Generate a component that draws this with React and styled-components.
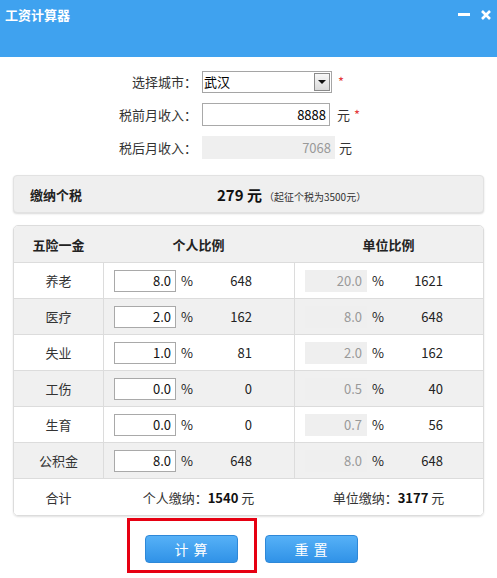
import React from "react";
import styled, { createGlobalStyle } from "styled-components";

const GlobalStyle = createGlobalStyle`
  html, body { margin: 0; padding: 0; background: #fff; }
  body {
    font-family: "Noto Sans CJK SC", "Noto Sans", "Liberation Sans", sans-serif;
    font-size: 13px;
    color: #333;
  }
  * { box-sizing: border-box; }
`;

const Page = styled.div`
  width: 497px;
  height: 578px;
  overflow: hidden;
`;

const TitleBar = styled.div`
  height: 57px;
  background: #3fa2ef;
  display: flex;
  justify-content: space-between;
  align-items: flex-start;
  padding: 7px 5px 0 5px;
`;

const Title = styled.div`
  color: #fff;
  font-weight: bold;
  font-size: 13px;
  line-height: 16px;
`;

const WinBtns = styled.div`
  display: flex;
  gap: 9px;
  padding-top: 2px;
`;

const Form = styled.div`
  display: flex;
  flex-direction: column;
  gap: 10px;
  padding-top: 13px;
`;

const FormRow = styled.div`
  display: flex;
  align-items: center;
  height: 23px;
`;

const FieldLabel = styled.div`
  width: 197px;
  text-align: right;
  margin-right: 5px;
  color: #333;
`;

const SelectBox = styled.div`
  width: 130px;
  height: 22px;
  border: 1px solid #a5a5a5;
  background: #fff;
  display: flex;
  align-items: center;
  padding-left: 1px;
  color: #000;
`;

const SelectArrow = styled.div`
  margin-left: auto;
  margin-right: 1px;
  width: 16px;
  height: 18px;
  border: 1px solid #8a8a8a;
  background: linear-gradient(#f7f7f7, #dadada);
  display: flex;
  align-items: center;
  justify-content: center;
  &::after {
    content: "";
    border-left: 4px solid transparent;
    border-right: 4px solid transparent;
    border-top: 4px solid #111;
  }
`;

const TextBox = styled.div`
  width: ${(p) => p.$w}px;
  height: 23px;
  line-height: 21px;
  text-align: right;
  padding-right: 3px;
  border: 1px solid ${(p) => (p.$disabled ? "#efefef" : "#a9a9a9")};
  background: ${(p) => (p.$disabled ? "#efefef" : "#fff")};
  color: ${(p) => (p.$disabled ? "#999" : "#000")};
`;

const Unit = styled.span`
  margin-left: 7px;
  color: #333;
`;

const Star = styled.span`
  margin-left: ${(p) => p.$gap}px;
  color: #e4393c;
`;

const TaxBox = styled.div`
  margin: 16px 13px 0;
  height: 38px;
  border: 1px solid #e2e2e2;
  border-radius: 4px;
  background: #efefef;
  box-shadow: 0 1px 2px rgba(0, 0, 0, 0.15);
  display: flex;
  align-items: center;
  padding-left: 16px;
`;

const TaxLabel = styled.div`
  width: 187px;
  font-weight: bold;
  color: #222;
`;

const TaxValue = styled.div`
  font-weight: bold;
  font-size: 15px;
  color: #111;
`;

const TaxNote = styled.span`
  font-size: 10px;
  font-weight: normal;
  color: #333;
  margin-left: 2px;
`;

const Table = styled.div`
  margin: 12px 13px 0;
  border: 1px solid #dcdcdc;
  border-radius: 5px;
  overflow: hidden;
  box-shadow: 0 1px 2px rgba(0, 0, 0, 0.12);
`;

const Row = styled.div`
  display: grid;
  grid-template-columns: 89px 191px 1fr;
  height: ${(p) => p.$h}px;
  background: ${(p) => (p.$gray ? "#f0f0f0" : "#fff")};
  border-bottom: ${(p) => (p.$last ? "none" : "1px solid #dcdcdc")};
`;

const Cell = styled.div`
  display: flex;
  align-items: center;
  justify-content: ${(p) => (p.$center ? "center" : "flex-start")};
  padding-left: ${(p) => (p.$center ? 0 : 10)}px;
  border-left: ${(p) => (p.$divider ? "1px solid #dcdcdc" : "none")};
  font-weight: ${(p) => (p.$bold ? "bold" : "normal")};
  color: ${(p) => (p.$bold ? "#222" : "#333")};
`;

const RateBox = styled.div`
  width: 62px;
  height: 22px;
  line-height: 20px;
  text-align: right;
  padding-right: 4px;
  border: 1px solid ${(p) => (p.$disabled ? "transparent" : "#a9a9a9")};
  background: ${(p) => (p.$disabled ? "#efefef" : "#fff")};
  color: ${(p) => (p.$disabled ? "#999" : "#111")};
`;

const Pct = styled.span`
  margin-left: 5px;
  width: 11px;
  color: #222;
`;

const Amount = styled.span`
  width: 60px;
  text-align: right;
  color: #222;
`;

const Strong = styled.b`
  color: #111;
`;

const Buttons = styled.div`
  display: flex;
  justify-content: center;
  gap: 27px;
  margin-top: 19px;
  padding-left: 6px;
`;

const BtnWrap = styled.div`
  position: relative;
`;

const Highlight = styled.div`
  position: absolute;
  left: -18px;
  top: -17px;
  width: 130px;
  height: 55px;
  border: 3px solid #e60012;
  pointer-events: none;
`;

const Button = styled.button`
  width: 93px;
  height: 28px;
  border: 1px solid #2e88d8;
  border-radius: 4px;
  background: linear-gradient(#56b1f7, #3092e7);
  color: #fff;
  font-family: inherit;
  font-size: 14px;
  letter-spacing: 1px;
  padding: 0;
`;

const rows = [
  { name: "养老", p: "8.0", pv: "648", u: "20.0", uv: "1621" },
  { name: "医疗", p: "2.0", pv: "162", u: "8.0", uv: "648" },
  { name: "失业", p: "1.0", pv: "81", u: "2.0", uv: "162" },
  { name: "工伤", p: "0.0", pv: "0", u: "0.5", uv: "40" },
  { name: "生育", p: "0.0", pv: "0", u: "0.7", uv: "56" },
  { name: "公积金", p: "8.0", pv: "648", u: "8.0", uv: "648" },
];

export default function App() {
  return (
    <Page>
      <GlobalStyle />
      <TitleBar>
        <Title>工资计算器</Title>
        <WinBtns>
          <svg width="14" height="12" viewBox="0 0 14 12">
            <rect x="1" y="4" width="12" height="3" fill="#fff" />
          </svg>
          <svg width="12" height="12" viewBox="0 0 12 12">
            <path d="M2 2 L10 10 M10 2 L2 10" stroke="#fff" strokeWidth="2.6" />
          </svg>
        </WinBtns>
      </TitleBar>

      <Form>
        <FormRow>
          <FieldLabel>选择城市：</FieldLabel>
          <SelectBox>
            武汉
            <SelectArrow />
          </SelectBox>
          <Star $gap={6}>*</Star>
        </FormRow>
        <FormRow>
          <FieldLabel>税前月收入：</FieldLabel>
          <TextBox $w={128}>8888</TextBox>
          <Unit>元</Unit>
          <Star $gap={4}>*</Star>
        </FormRow>
        <FormRow>
          <FieldLabel>税后月收入：</FieldLabel>
          <TextBox $w={133} $disabled>7068</TextBox>
          <Unit style={{ marginLeft: 4 }}>元</Unit>
        </FormRow>
      </Form>

      <TaxBox>
        <TaxLabel>缴纳个税</TaxLabel>
        <TaxValue>
          279 元<TaxNote>（起征个税为3500元）</TaxNote>
        </TaxValue>
      </TaxBox>

      <Table>
        <Row $h={37} $gray>
          <Cell $center $bold>五险一金</Cell>
          <Cell $center $bold>个人比例</Cell>
          <Cell $center $bold>单位比例</Cell>
        </Row>
        {rows.map((r, i) => (
          <Row key={r.name} $h={36} $gray={i % 2 === 1}>
            <Cell $center>{r.name}</Cell>
            <Cell $divider>
              <RateBox>{r.p}</RateBox>
              <Pct>%</Pct>
              <Amount>{r.pv}</Amount>
            </Cell>
            <Cell $divider>
              <RateBox $disabled>{r.u}</RateBox>
              <Pct>%</Pct>
              <Amount>{r.uv}</Amount>
            </Cell>
          </Row>
        ))}
        <Row $h={36} $last>
          <Cell $center>合计</Cell>
          <Cell $center>
            个人缴纳：<Strong>1540</Strong>&nbsp;元
          </Cell>
          <Cell $center>
            单位缴纳：<Strong>3177</Strong>&nbsp;元
          </Cell>
        </Row>
      </Table>

      <Buttons>
        <BtnWrap>
          <Button>计 算</Button>
          <Highlight />
        </BtnWrap>
        <Button>重 置</Button>
      </Buttons>
    </Page>
  );
}
